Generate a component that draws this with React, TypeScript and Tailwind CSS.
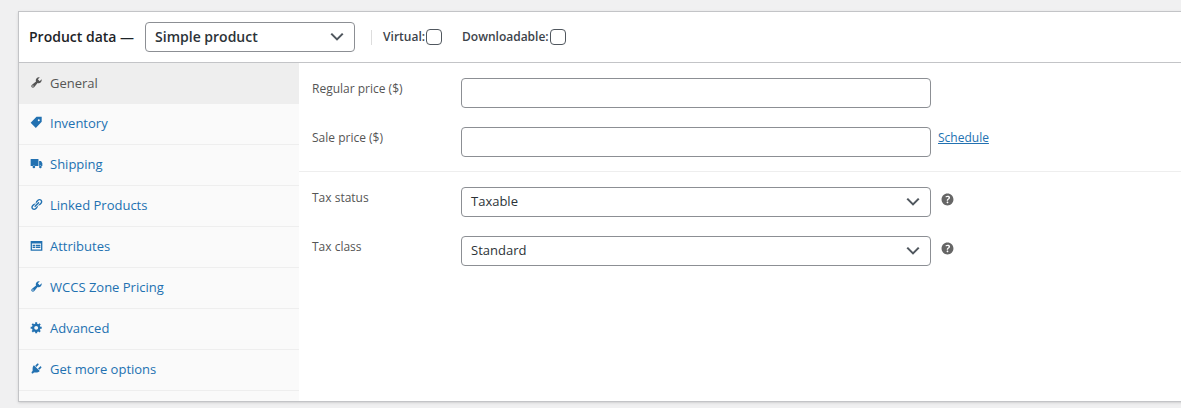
import React from 'react';

const font = { wrench: 'M16.68 9.77c-1.34 1.34-3.3 1.67-4.95.99l-5.41 6.52c-.99.99-2.59.99-3.58 0s-.99-2.59 0-3.57l6.52-5.42c-.68-1.65-.35-3.61.99-4.95 1.28-1.28 3.12-1.62 4.72-1.06l-2.89 2.89 2.82 2.82 2.86-2.87c.53 1.58.18 3.39-1.08 4.65zM3.81 16.21c.4.39 1.04.39 1.43 0 .4-.4.4-1.04 0-1.43-.39-.4-1.03-.4-1.43 0-.39.39-.39 1.03 0 1.43z',
  tag: 'M10 1h8v8L9 18.5 1 10.5zm5 5.5a1.5 1.5 0 1 0-3 0 1.5 1.5 0 0 0 3 0z',
  truck: 'M1 3h12v11H1zM14 6h3l2 3.5V14h-5zM5 13.5a2 2 0 1 1 0 3.5 2 2 0 0 1 0-3.5zM15 13.5a2 2 0 1 1 0 3.5 2 2 0 0 1 0-3.5z',
  link: 'M17.74 2.76c1.68 1.69 1.68 4.41 0 6.1l-1.53 1.52c-1.12 1.12-2.7 1.47-4.14 1.09l2.62-2.61.76-.77.76-.76c.84-.84.84-2.2 0-3.04-.84-.85-2.2-.85-3.04 0l-.77.76-3.38 3.38c-.37-1.44-.02-3.02 1.1-4.14l1.52-1.53c1.69-1.68 4.42-1.68 6.1 0zM8.59 13.43l5.34-5.34c.42-.42.42-1.1 0-1.52-.44-.43-1.13-.39-1.53 0l-5.33 5.34c-.42.42-.42 1.1 0 1.52.44.43 1.13.39 1.52 0zm-.76 2.29l4.14-4.15c.38 1.44.03 3.02-1.09 4.14l-1.52 1.53c-1.69 1.68-4.41 1.68-6.1 0-1.68-1.68-1.68-4.42 0-6.1l1.53-1.52c1.12-1.12 2.7-1.47 4.14-1.1l-4.14 4.15c-.85.84-.85 2.2 0 3.05.84.84 2.2.84 3.04 0z',
  table: 'M1 3h18v15H1zM3 7v9h14V7zM4 9h4v2H4zM9 9h7v2H9zM4 12h4v2H4zM9 12h7v2H9z',
  gear: 'M18 12h-2.18c-.17.7-.44 1.35-.81 1.93l1.54 1.54-2.1 2.1-1.54-1.54c-.58.36-1.23.63-1.91.79V19H8v-2.18c-.68-.16-1.33-.43-1.91-.79l-1.54 1.54-2.12-2.12 1.54-1.54c-.36-.58-.63-1.23-.79-1.91H1V9.03h2.17c.16-.7.44-1.35.8-1.94L2.43 5.55l2.1-2.1 1.54 1.54c.58-.37 1.24-.64 1.93-.81V2h3v2.18c.68.16 1.33.43 1.91.79l1.54-1.54 2.12 2.12-1.54 1.54c.36.59.64 1.24.8 1.94H18V12zm-8.5 1.5c1.66 0 3-1.34 3-3s-1.34-3-3-3-3 1.34-3 3 1.34 3 3 3z',
  plug: 'M13.11 4.36L9.87 7.6 8 5.73l3.24-3.24c.35-.34 1.05-.2 1.56.32.52.51.66 1.21.31 1.55zm-8 1.77l.91-1.12 9.01 9.01-1.19.84c-.71.71-2.63 1.16-3.82 1.16H6.14L4.9 17.26c-.59.59-1.54.59-2.12 0-.59-.58-.59-1.53 0-2.12l1.24-1.24v-3.88c0-1.13.4-3.19 1.09-3.89zm7.26 3.97l3.24-3.24c.34-.35 1.04-.21 1.55.31.52.51.66 1.21.31 1.55l-3.24 3.25z',
  help: 'M17 10c0-3.87-3.14-7-7-7-3.87 0-7 3.13-7 7s3.13 7 7 7c3.86 0 7-3.13 7-7zm-6.3 1.48H9.14v-.43c0-.38.08-.7.24-.98s.46-.57.88-.89c.41-.29.68-.53.81-.71.14-.18.2-.39.2-.62 0-.25-.09-.44-.28-.58-.19-.13-.45-.19-.79-.19-.58 0-1.25.19-2 .57l-.64-1.28c.87-.49 1.8-.74 2.77-.74.81 0 1.45.2 1.92.58.48.39.71.91.71 1.55 0 .43-.09.8-.29 1.11-.19.32-.57.67-1.11 1.06-.38.28-.61.49-.71.63-.1.15-.15.34-.15.57v.35zm-1.47 2.74c-.18-.17-.27-.42-.27-.73 0-.33.08-.58.26-.75s.43-.25.77-.25c.32 0 .57.09.75.26s.27.42.27.74c0 .3-.09.55-.27.72-.18.18-.43.27-.75.27-.33 0-.58-.09-.76-.26z',
};

const tabs = [
  { label: 'General', icon: font.wrench },
  { label: 'Inventory', icon: font.tag },
  { label: 'Shipping', icon: font.truck },
  { label: 'Linked Products', icon: font.link },
  { label: 'Attributes', icon: font.table },
  { label: 'WCCS Zone Pricing', icon: font.wrench },
  { label: 'Advanced', icon: font.gear },
  { label: 'Get more options', icon: font.plug },
];

const Glyph = ({ d, className }: { d: string; className: string }) => (
  <svg viewBox="0 0 20 20" fill="currentColor" fillRule="evenodd" className={className}>
    <path d={d} />
  </svg>
);

const Chevron = () => (
  <svg viewBox="0 0 20 20" fill="currentColor" className="absolute right-[7px] top-1/2 h-5 w-5 -translate-y-1/2 text-[#50575e]">
    <path d="M5 6l5 5 5-5 1.5 1.3L10 13.8 3.5 7.3z" />
  </svg>
);

const SelectBox = ({ value, className }: { value: string; className: string }) => (
  <div className={`relative flex h-[30px] items-center rounded border border-[#8c8f94] bg-white px-[9px] text-[#2c3338] ${className}`}>
    {value}
    <Chevron />
  </div>
);

const Row = ({ label, children }: { label: string; children: React.ReactNode }) => (
  <div className="flex items-start">
    <label className="w-[149px] pt-[3px] text-xs text-[#555]">{label}</label>
    {children}
  </div>
);

export default function App() {
  return (
    <div className="h-[408px] w-[1181px] overflow-hidden bg-[#f0f0f1] pl-[18px] pt-[11px] text-[13px] font-['Open_Sans','Noto_Sans',sans-serif]">
      <div className="flex h-[391px] w-[1180px] flex-col border border-[#c3c4c7] bg-white shadow-sm">
        {/* Header */}
        <div className="flex h-[51px] shrink-0 items-center border-b border-[#c3c4c7] pl-[10px]">
          <span className="text-sm font-semibold text-[#1d2327]">Product data —</span>
          <SelectBox value="Simple product" className="ml-[11px] w-[210px] text-sm font-semibold" />
          <div className="ml-4 h-[15px] w-px bg-[#ddd]" />
          <label className="ml-[11px] flex items-center text-xs font-semibold text-[#3c434a]">
            Virtual:
            <span className="ml-px h-4 w-4 rounded border border-[#50575e] bg-white" />
          </label>
          <label className="ml-5 flex items-center text-xs font-semibold text-[#3c434a]">
            Downloadable:
            <span className="ml-px h-4 w-4 rounded border border-[#50575e] bg-white" />
          </label>
        </div>

        <div className="flex min-h-0 flex-1">
          {/* Tabs */}
          <ul className="w-[280px] shrink-0 bg-[#fafafa]">
            {tabs.map((tab, i) => (
              <li
                key={tab.label}
                className={`flex h-[41px] items-center pl-[11px] ${i === 0 ? 'bg-[#eee] text-[#555]' : 'border-b border-[#eee] text-[#2271b1]'}`}
              >
                <Glyph d={tab.icon} className="mb-[3px] h-[13px] w-[13px] shrink-0" />
                <span className="ml-[7px]">{tab.label}</span>
              </li>
            ))}
          </ul>

          {/* General panel */}
          <div className="flex-1 bg-white">
            <div className="flex flex-col gap-[19px] border-b border-[#eee] pb-[14px] pl-[13px] pt-[15px]">
              <Row label="Regular price ($)">
                <div className="h-[30px] w-[470px] rounded border border-[#8c8f94] bg-white" />
              </Row>
              <Row label="Sale price ($)">
                <div className="h-[30px] w-[470px] rounded border border-[#8c8f94] bg-white" />
                <a className="ml-[7px] mt-[3px] text-xs text-[#2271b1] underline">Schedule</a>
              </Row>
            </div>
            <div className="flex flex-col gap-[19px] pl-[13px] pt-[15px]">
              <Row label="Tax status">
                <SelectBox value="Taxable" className="w-[470px]" />
                <Glyph d={font.help} className="ml-[8px] mt-[4px] h-[17px] w-[17px] text-[#666]" />
              </Row>
              <Row label="Tax class">
                <SelectBox value="Standard" className="w-[470px]" />
                <Glyph d={font.help} className="ml-[8px] mt-[4px] h-[17px] w-[17px] text-[#666]" />
              </Row>
            </div>
          </div>
        </div>
      </div>
    </div>
  );
}
